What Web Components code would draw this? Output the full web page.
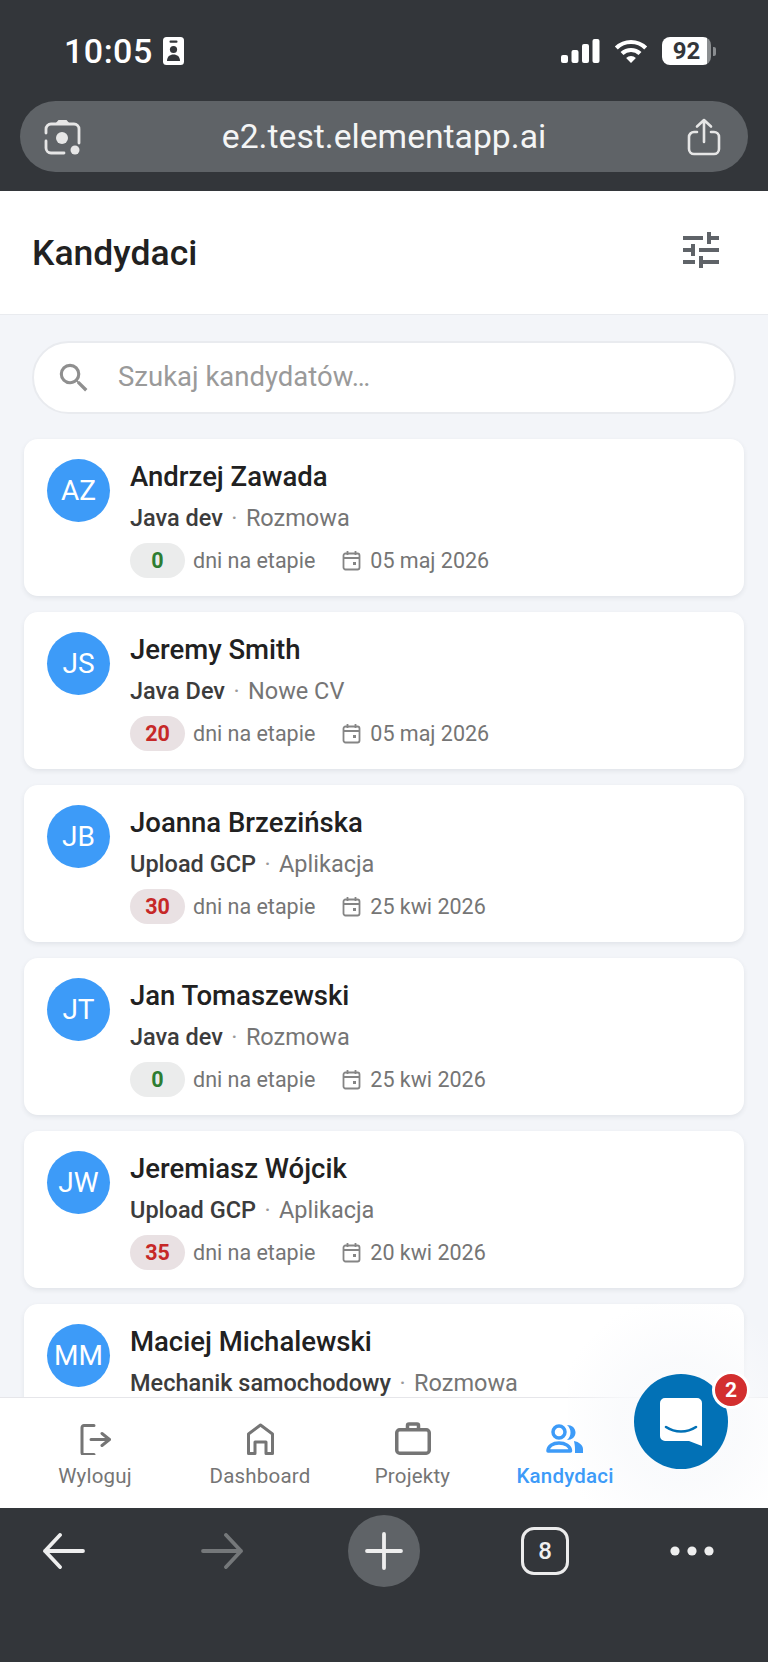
<!DOCTYPE html>
<html lang="pl">
<head>
<meta charset="utf-8">
<title>Kandydaci</title>
<style>
  html, body { margin: 0; padding: 0; }
  body { width: 768px; height: 1662px; overflow: hidden; font-family: Roboto, "Liberation Sans", sans-serif; background: #f3f5f9; }
  #app { display: flex; flex-direction: column; height: 1662px; position: relative; overflow: hidden; }
</style>
</head>
<body>
<div id="app">
  <browser-top></browser-top>
  <app-header>Kandydaci</app-header>
  <candidate-list>
    <search-box placeholder="Szukaj kandydatów…"></search-box>
    <candidate-card initials="AZ" name="Andrzej Zawada" role="Java dev" stage="Rozmowa" days="0" date="05 maj 2026"></candidate-card>
    <candidate-card initials="JS" name="Jeremy Smith" role="Java Dev" stage="Nowe CV" days="20" date="05 maj 2026"></candidate-card>
    <candidate-card initials="JB" name="Joanna Brzezińska" role="Upload GCP" stage="Aplikacja" days="30" date="25 kwi 2026"></candidate-card>
    <candidate-card initials="JT" name="Jan Tomaszewski" role="Java dev" stage="Rozmowa" days="0" date="25 kwi 2026"></candidate-card>
    <candidate-card initials="JW" name="Jeremiasz Wójcik" role="Upload GCP" stage="Aplikacja" days="35" date="20 kwi 2026"></candidate-card>
    <candidate-card initials="MM" name="Maciej Michalewski" role="Mechanik samochodowy" stage="Rozmowa"></candidate-card>
  </candidate-list>
  <bottom-nav></bottom-nav>
  <browser-bottom></browser-bottom>
  <chat-fab count="2"></chat-fab>
</div>

<script>
// Status bar and address bar of the phone browser
class BrowserTop extends HTMLElement {
  constructor() {
    super();
    const shadow = this.attachShadow({ mode: "open" });
    shadow.innerHTML = `
      <style>
        :host { display: block; height: 191px; background: #33363a; color: #fff; box-sizing: border-box; padding: 37px 20px 0; flex: none; font-family: Roboto, sans-serif; }
        .status { display: flex; align-items: center; height: 28px; padding: 0 32px 0 44px; }
        .time { font-size: 34px; font-weight: 500; line-height: 28px; letter-spacing: 0.5px; width: 99px; }
        .right { margin-left: auto; display: flex; align-items: center; gap: 14px; }
        .batt { display: flex; align-items: center; gap: 2px; }
        .level { width: 49px; height: 28px; border-radius: 8px; background: linear-gradient(90deg, #fff 92%, #8b8e90 92%); color: #33363a; font-size: 24px; font-weight: 700; display: flex; align-items: center; justify-content: center; }
        .nub { width: 3px; height: 9px; background: #8a8d90; border-radius: 0 2px 2px 0; }
        .url { margin-top: 36px; height: 71px; border-radius: 36px; background: #5f6367; display: flex; align-items: center; justify-content: space-between; padding: 0 27px 0 24px; }
        .addr { font-size: 33.700px; color: #f4f5f5; }
        svg { display: block; }
      </style>
      <div class="status">
        <span class="time">10:05</span>
        <svg width="21" height="28" viewBox="0 0 21 28"><rect width="21" height="28" rx="3.5" fill="#fff"/><rect x="6.5" y="3.5" width="8" height="2.2" rx="1" fill="#33363a"/><circle cx="10.500" cy="12.5" r="3.6" fill="#33363a"/><path d="M4 24c0-4.6 2.8-6.6 6.500-6.600S17 19.400 17 24z" fill="#33363a"/></svg>
        <div class="right">
          <svg width="39" height="24" viewBox="0 0 39 24"><rect x="0" y="16" width="7" height="8" rx="2" fill="#fff"/><rect x="10.5" y="11" width="7" height="13" rx="2" fill="#fff"/><rect x="21" y="5" width="7" height="19" rx="2" fill="#fff"/><rect x="31.5" y="0" width="7" height="24" rx="2" fill="#fff"/></svg>
          <svg width="34" height="24" viewBox="0 0 34 24" fill="none" stroke="#fff" stroke-width="4.2"><path d="M2.300 9a21 21 0 0 1 29.400 0"/><path d="M8 14.600a13 13 0 0 1 18 0"/><path d="M17 24 12.100 18.900a7 7 0 0 1 9.800 0z" fill="#fff" stroke="none"/></svg>
          <div class="batt"><div class="level">92</div><div class="nub"></div></div>
        </div>
      </div>
      <div class="url">
        <svg width="37" height="36" viewBox="0 0 37 36" fill="none" stroke="#e6e6e6" stroke-width="2.800" stroke-linecap="round"><path d="M2 14v-4a5 5 0 0 1 5-5h23a5 5 0 0 1 5 5v14"/><path d="M2 22v7a5 5 0 0 0 5 5h13"/><path d="M11 5l3.500-4h8L26 5z" fill="#e6e6e6" stroke="none"/><circle cx="18" cy="19" r="6" fill="#e6e6e6" stroke="none"/><circle cx="31" cy="31" r="4.500" fill="#e6e6e6" stroke="none"/></svg>
        <span class="addr">e2.test.elementapp.ai</span>
        <svg width="34" height="38" viewBox="0 0 34 38" fill="none" stroke="#e6e6e6" stroke-width="2.600" stroke-linecap="round" stroke-linejoin="round"><path d="M10 14H7a5 5 0 0 0-5 5v12a5 5 0 0 0 5 5h20a5 5 0 0 0 5-5V19a5 5 0 0 0-5-5h-3"/><path d="M17 24V2M10 8.5 17 2l7 6.5"/></svg>
      </div>
    `;
  }
}
customElements.define("browser-top", BrowserTop);

class AppHeader extends HTMLElement {
  constructor() {
    super();
    const shadow = this.attachShadow({ mode: "open" });
    shadow.innerHTML = `
      <style>
        :host { display: flex; align-items: center; justify-content: space-between; height: 124px; box-sizing: border-box; padding: 0 43px 0 32px; background: #fff; border-bottom: 1px solid #e9ebef; flex: none; }
        .title { font-size: 35.500px; font-weight: 500; color: #212121; font-family: Roboto, sans-serif; }
        svg { display: block; margin-top: -5px; }
      </style>
      <span class="title"><slot></slot></span>
      <svg width="48" height="48" viewBox="0 0 24 24" fill="#5f6368"><path d="M3 17v2h6v-2H3zM3 5v2h10V5H3zm10 16v-2h8v-2h-8v-2h-2v6h2zM7 9v2H3v2h4v2h2V9H7zm14 4v-2H11v2h10zm-6-4h2V7h4V5h-4V3h-2v6z"/></svg>
    `;
  }
}
customElements.define("app-header", AppHeader);

// Scroll area, the last card gets cut off by the nav
class CandidateList extends HTMLElement {
  constructor() {
    super();
    const shadow = this.attachShadow({ mode: "open" });
    shadow.innerHTML = `
      <style>
        :host { display: flex; flex-direction: column; gap: 16px; flex: 1; min-height: 0; overflow: hidden; padding: 0 24px; background: #f3f5f9; }
      </style>
      <slot></slot>
    `;
  }
}
customElements.define("candidate-list", CandidateList);

class SearchBox extends HTMLElement {
  constructor() {
    super();
    const shadow = this.attachShadow({ mode: "open" });
    shadow.innerHTML = `
      <style>
        :host { display: flex; align-items: center; flex: none; height: 73px; margin: 26px 8px 9px; box-sizing: border-box; padding: 0 24px 0 21px; background: #fff; border: 2px solid #e9ebef; border-radius: 37px; font-family: Roboto, sans-serif; }
        svg { display: block; flex: none; }
        .ph { margin: -3px 0 0 25px; font-size: 27.500px; color: #9a9a9a; }
      </style>
      <svg width="38" height="38" viewBox="0 0 24 24" fill="#8f8f8f"><path d="M15.5 14h-.79l-.28-.27A6.471 6.471 0 0 0 16 9.5 6.5 6.5 0 1 0 9.5 16c1.61 0 3.09-.59 4.23-1.57l.27.28v.79l5 4.99L20.49 19l-4.99-5zm-6 0C7.01 14 5 11.99 5 9.5S7.01 5 9.5 5 14 7.01 14 9.5 11.99 14 9.5 14z"/></svg>
      <span class="ph"></span>
    `;
    shadow.querySelector(".ph").textContent = this.getAttribute("placeholder");
  }
}
customElements.define("search-box", SearchBox);

class CandidateCard extends HTMLElement {
  constructor() {
    super();
    const shadow = this.attachShadow({ mode: "open" });
    const hasDays = this.hasAttribute("days");
    const late = Number(this.getAttribute("days")) > 0;
    shadow.innerHTML = `
      <style>
        :host { display: flex; flex: none; gap: 20px; height: 157px; box-sizing: border-box; padding: 20px 23px 0; background: #fff; border-radius: 14px; box-shadow: 0 2px 5px rgba(40, 50, 70, 0.09); font-family: Roboto, sans-serif; }
        .avatar { width: 63px; height: 63px; border-radius: 50%; background: #3d9bf8; color: #fff; font-size: 28px; display: flex; align-items: center; justify-content: center; flex: none; }
        .info { display: flex; flex-direction: column; min-width: 0; }
        .name { margin-top: 1px; font-size: 27.500px; font-weight: 500; color: #212121; line-height: 34px; }
        .sub { margin-top: 9px; font-size: 23.500px; line-height: 30px; color: #757575; white-space: nowrap; }
        .role { font-weight: 500; color: #3c3c3c; }
        .dot { margin: 0 2.600px; color: #9a9a9a; }
        .meta { margin-top: 10px; display: flex; align-items: center; font-size: 21.500px; color: #757575; white-space: nowrap; }
        .pill { width: 55px; height: 35px; border-radius: 18px; display: flex; align-items: center; justify-content: center; font-weight: 700; font-size: 21.500px; margin-right: 8px; }
        .pill.ok { background: #ebecec; color: #2e7d32; }
        .pill.late { background: #e9e1e3; color: #c62828; }
        svg { display: block; margin: 0 8px 0 26px; flex: none; }
      </style>
      <div class="avatar"></div>
      <div class="info">
        <div class="name"></div>
        <div class="sub"><span class="role"></span><span class="dot"> · </span><span class="stage"></span></div>
        ${hasDays ? `<div class="meta">
          <span class="pill ${late ? "late" : "ok"}"></span><span>dni na etapie</span>
          <svg width="21" height="21" viewBox="0 0 21 21" fill="none" stroke="#858585" stroke-width="1.800"><rect x="2.500" y="3.500" width="16" height="16" rx="2"/><path d="M2.500 8h16M6.500 1v4M14.500 1v4"/><rect x="12" y="12" width="3" height="3" fill="#858585" stroke="none"/></svg>
          <span class="date"></span>
        </div>` : ""}
      </div>
    `;
    shadow.querySelector(".avatar").textContent = this.getAttribute("initials");
    shadow.querySelector(".name").textContent = this.getAttribute("name");
    shadow.querySelector(".role").textContent = this.getAttribute("role");
    shadow.querySelector(".stage").textContent = this.getAttribute("stage");
    if (hasDays) {
      shadow.querySelector(".pill").textContent = this.getAttribute("days");
      shadow.querySelector(".date").textContent = this.getAttribute("date");
    }
  }
}
customElements.define("candidate-card", CandidateCard);

const NAV_ICONS = {
  logout: `<path d="M15 3.500H5a2 2 0 0 0-2 2v25a2 2 0 0 0 2 2h10" fill="none" stroke-width="3"/><path d="M12 17.500h18M23 11.500l7.500 6-7.500 6" fill="none" stroke-width="3"/>`,
  home: `<path d="M1.500 31.500V12L13.500 3l12 9v19.500H19V20H8v11.500z" fill="none" stroke-width="3"/>`,
  work: `<rect x="1.750" y="7.750" width="32.500" height="23.500" rx="3" fill="none" stroke-width="3.500"/><path d="M12.500 7V3.500a1.500 1.500 0 0 1 1.500-1.500h8a1.500 1.500 0 0 1 1.500 1.500V7" fill="none" stroke-width="3.500"/>`,
  group: `<circle cx="13" cy="10" r="6" fill="none" stroke-width="3.500"/><path d="M2 29c0-5 5-8 11-8s11.500 3 11.500 8z" fill="none" stroke-width="3.500"/><path d="M21 3c5 0 8.500 3 8.500 7.500S26 18 21 18c2.200-2 3.500-4.500 3.500-7.500S23.200 5 21 3z" fill="currentColor" stroke="none"/><path d="M28 19c5 1 9 4 9 8v4h-8v-4c0-3-.500-5.500-1-8z" fill="currentColor" stroke="none"/>`
};

class NavItem extends HTMLElement {
  constructor() {
    super();
    const shadow = this.attachShadow({ mode: "open" });
    const active = this.hasAttribute("active");
    const colour = active ? "#3d9bf8" : "#757575";
    const w = this.getAttribute("w");
    // z-index keeps the label above the chat button's glow
    shadow.innerHTML = `
      <style>
        :host { display: flex; flex-direction: column; align-items: center; z-index: 2; color: ${colour}; font-family: Roboto, sans-serif; }
        svg { display: block; }
        .label { margin-top: 8px; font-size: 20.500px; line-height: 26px; letter-spacing: 0.2px; font-weight: ${active ? 500 : 400}; white-space: nowrap; }
      </style>
      <svg width="${w}" height="33" viewBox="0 0 ${w} 33" stroke="${colour}" stroke-linecap="round" stroke-linejoin="round">${NAV_ICONS[this.getAttribute("icon")]}</svg>
      <span class="label"><slot></slot></span>
    `;
  }
}
customElements.define("nav-item", NavItem);

class BottomNav extends HTMLElement {
  constructor() {
    super();
    const shadow = this.attachShadow({ mode: "open" });
    shadow.innerHTML = `
      <style>
        :host { display: grid; grid-template-columns: 190px 140px 165px 140px; align-items: start; flex: none; height: 111px; box-sizing: border-box; padding-top: 24px; background: #fff; border-top: 1px solid #e6e6ea; }
      </style>
      <nav-item icon="logout" w="32">Wyloguj</nav-item>
      <nav-item icon="home" w="27">Dashboard</nav-item>
      <nav-item icon="work" w="36">Projekty</nav-item>
      <nav-item icon="group" w="38" active>Kandydaci</nav-item>
    `;
  }
}
customElements.define("bottom-nav", BottomNav);

class BrowserBottom extends HTMLElement {
  constructor() {
    super();
    const shadow = this.attachShadow({ mode: "open" });
    shadow.innerHTML = `
      <style>
        :host { display: block; height: 154px; box-sizing: border-box; background: #33363a; padding: 7px 0 0 42px; flex: none; font-family: Roboto, sans-serif; }
        .row { display: flex; align-items: center; height: 72px; }
        .fwd { margin-left: 116px; }
        .plus { margin-left: 103px; width: 72px; height: 72px; border-radius: 50%; background: #5f6367; display: flex; align-items: center; justify-content: center; }
        .tabs { margin-left: 101px; width: 48px; height: 48px; box-sizing: border-box; border: 3.500px solid #ececec; border-radius: 13px; color: #f0f0f0; font-size: 24px; font-weight: 500; display: flex; align-items: center; justify-content: center; }
        .more { margin-left: 101px; }
        svg { display: block; }
      </style>
      <div class="row">
        <svg width="43" height="36" viewBox="0 0 43 36" fill="none" stroke="#eeeeee" stroke-width="3.800" stroke-linecap="round" stroke-linejoin="round"><path d="M41 18H3M18 2 3 18l15 16"/></svg>
        <svg class="fwd" width="44" height="36" viewBox="0 0 44 36" fill="none" stroke="#75787a" stroke-width="3.800" stroke-linecap="round" stroke-linejoin="round"><path d="M2 18h38M25 2l15 16-15 16"/></svg>
        <div class="plus"><svg width="38" height="38" viewBox="0 0 38 38" stroke="#eeeeee" stroke-width="3.800" stroke-linecap="round"><path d="M19 2v34M2 19h34"/></svg></div>
        <div class="tabs">8</div>
        <svg class="more" width="44" height="12" viewBox="0 0 44 12" fill="#eeeeee"><circle cx="5" cy="6" r="4.600"/><circle cx="22" cy="6" r="4.600"/><circle cx="39" cy="6" r="4.600"/></svg>
      </div>
    `;
  }
}
customElements.define("browser-bottom", BrowserBottom);

// Chat launcher floating over the nav, with its soft glow
class ChatFab extends HTMLElement {
  constructor() {
    super();
    const shadow = this.attachShadow({ mode: "open" });
    shadow.innerHTML = `
      <style>
        :host { position: absolute; z-index: 1; left: 568px; top: 1300px; width: 200px; height: 208px; display: block; font-family: Roboto, sans-serif; pointer-events: none; background: radial-gradient(circle at 113px 122px, rgba(249, 250, 252, 0.95) 0, rgba(249, 250, 252, 0.85) 60px, rgba(249, 250, 252, 0) 125px); }
        .btn { position: absolute; left: 66px; top: 74px; width: 94px; height: 95px; border-radius: 50%; background: #0271b6; display: flex; align-items: center; justify-content: center; }
        .badge { position: absolute; left: 144px; top: 71px; width: 32px; height: 32px; border-radius: 50%; background: #d32f2f; border: 3px solid #fff; color: #fff; font-size: 21px; font-weight: 700; display: flex; align-items: center; justify-content: center; }
        svg { display: block; }
      </style>
      <div class="btn">
        <svg width="42" height="48" viewBox="0 0 42 48"><path d="M5 0h32a5 5 0 0 1 5 5v43l-13-5H5a5 5 0 0 1-5-5V5a5 5 0 0 1 5-5z" fill="#fff"/><path d="M6 29c9 6 21 6 30 0" fill="none" stroke="#0271b6" stroke-width="2.600" stroke-linecap="round"/></svg>
      </div>
      <div class="badge"></div>
    `;
    shadow.querySelector(".badge").textContent = this.getAttribute("count");
  }
}
customElements.define("chat-fab", ChatFab);
</script>
</body>
</html>
